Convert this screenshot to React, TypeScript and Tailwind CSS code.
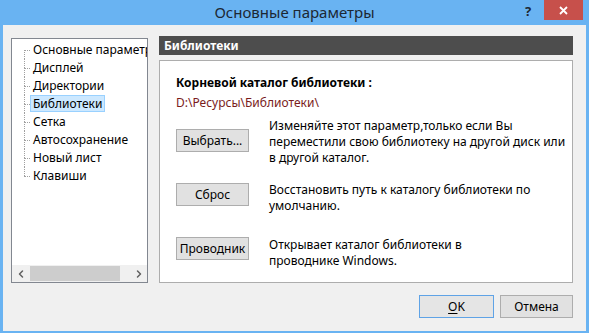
import { ChevronLeft, ChevronRight } from "lucide-react";

const font = { fontFamily: '"Segoe UI", "Noto Sans", "Open Sans", sans-serif' };

const pages = [
  "Основные параметры",
  "Дисплей",
  "Директории",
  "Библиотеки",
  "Сетка",
  "Автосохранение",
  "Новый лист",
  "Клавиши",
];

function TreeRow({ label, first, last, selected }: { label: string; first: boolean; last: boolean; selected: boolean }) {
  return (
    <div className="flex h-[18px] items-stretch">
      <div className="flex w-[6px] shrink-0 flex-col">
        <div className={`h-[9px] ${first ? "" : "border-l border-dotted border-[#a0a0a0]"}`} />
        <div className={`h-[9px] border-t border-dotted border-[#a0a0a0] ${last ? "" : "border-l"}`} />
      </div>
      <div
        className={`flex h-[17px] items-center whitespace-nowrap text-[12px] text-black ${
          selected ? "border border-[#99d1ff] bg-[#cce8ff] px-[2px]" : "border border-transparent px-[2px]"
        }`}
      >
        {label}
      </div>
    </div>
  );
}

function WinButton({ children }: { children: React.ReactNode }) {
  return (
    <button className="flex h-[23px] w-[73px] items-center justify-center border border-[#adadad] bg-[#e1e1e1] text-[12px] text-black">
      {children}
    </button>
  );
}

export default function App() {
  return (
    <div className="flex h-[333px] w-[589px] flex-col bg-[#69b3f2]" style={font}>
      {/* заголовок окна */}
      <div className="relative flex h-[25px] shrink-0 items-center justify-center">
        <span className="text-[15px] text-[#1c2733]">Основные параметры</span>
        <span className="absolute left-[525px] top-[2px] text-[13px] font-bold text-[#1c2733]">?</span>
        <div className="absolute left-[544px] top-0 flex h-[20px] w-[39px] items-center justify-center bg-[#c7504b]">
          <svg width="9" height="9" viewBox="0 0 9 9">
            <path d="M1 1 L8 8 M8 1 L1 8" stroke="white" strokeWidth="1.8" />
          </svg>
        </div>
      </div>

      <div className="mx-[3px] mb-[3px] flex flex-1 flex-col bg-[#f0f0f0] pb-[13px] pl-[8px] pr-[13px] pt-[11px]">
        <div className="flex flex-1 gap-[11px]">
          {/* дерево страниц */}
          <div className="mt-[2px] flex h-[245px] w-[137px] shrink-0 flex-col overflow-hidden border border-[#828790] bg-white">
            <div className="flex-1 overflow-hidden pl-[12px] pt-[2px]">
              {pages.map((p, i) => (
                <TreeRow key={p} label={p} first={i === 0} last={i === pages.length - 1} selected={p === "Библиотеки"} />
              ))}
            </div>
            <div className="flex h-[17px] items-center bg-[#f0f0f0]">
              <div className="flex w-[17px] justify-center text-[#606060]">
                <ChevronLeft size={12} strokeWidth={3} />
              </div>
              <div className="ml-[1px] h-[15px] w-[90px] bg-[#cdcdcd]" />
              <div className="flex-1" />
              <div className="flex w-[17px] justify-center text-[#606060]">
                <ChevronRight size={12} strokeWidth={3} />
              </div>
            </div>
          </div>

          {/* правая панель */}
          <div className="flex flex-1 flex-col">
            <div className="flex h-[19px] items-center bg-[#4d4d4d] pl-[5px] text-[12px] font-bold text-white">Библиотеки</div>
            <div className="mt-[5px] flex h-[223px] flex-col border border-[#adadad] bg-white pl-[16px] pt-[14px]">
              <div className="text-[12px] font-bold leading-[16px] text-black">Корневой каталог библиотеки :</div>
              <div className="mt-[4px] text-[12px] leading-[16px] text-[#7a1c1c]">D:\Ресурсы\Библиотеки\</div>

              <div className="mt-[7px] flex">
                <div className="mt-[11px]">
                  <WinButton>Выбрать...</WinButton>
                </div>
                <p className="ml-[20px] whitespace-nowrap text-[12px] leading-[16px] text-black">
                  Изменяйте этот параметр,только если Вы
                  <br />
                  переместили свою библиотеку на другой диск или
                  <br />в другой каталог.
                </p>
              </div>

              <div className="mt-[16px] flex">
                <div className="mt-[1px]">
                  <WinButton>Сброс</WinButton>
                </div>
                <p className="ml-[20px] whitespace-nowrap text-[12px] leading-[16px] text-black">
                  Восстановить путь к каталогу библиотеки по
                  <br />
                  умолчанию.
                </p>
              </div>

              <div className="mt-[23px] flex">
                <WinButton>Проводник</WinButton>
                <p className="ml-[20px] whitespace-nowrap text-[12px] leading-[16px] text-black">
                  Открывает каталог библиотеки в
                  <br />
                  проводнике Windows.
                </p>
              </div>
            </div>
          </div>
        </div>

        <div className="mt-[12px] flex justify-end gap-[6px]">
          <button className="flex h-[23px] w-[75px] items-center justify-center border border-[#5fa3e6] bg-[#e5e5e5] text-[12px] text-black">
            <span className="underline underline-offset-2">O</span>K
          </button>
          <WinButton>Отмена</WinButton>
        </div>
      </div>
    </div>
  );
}
